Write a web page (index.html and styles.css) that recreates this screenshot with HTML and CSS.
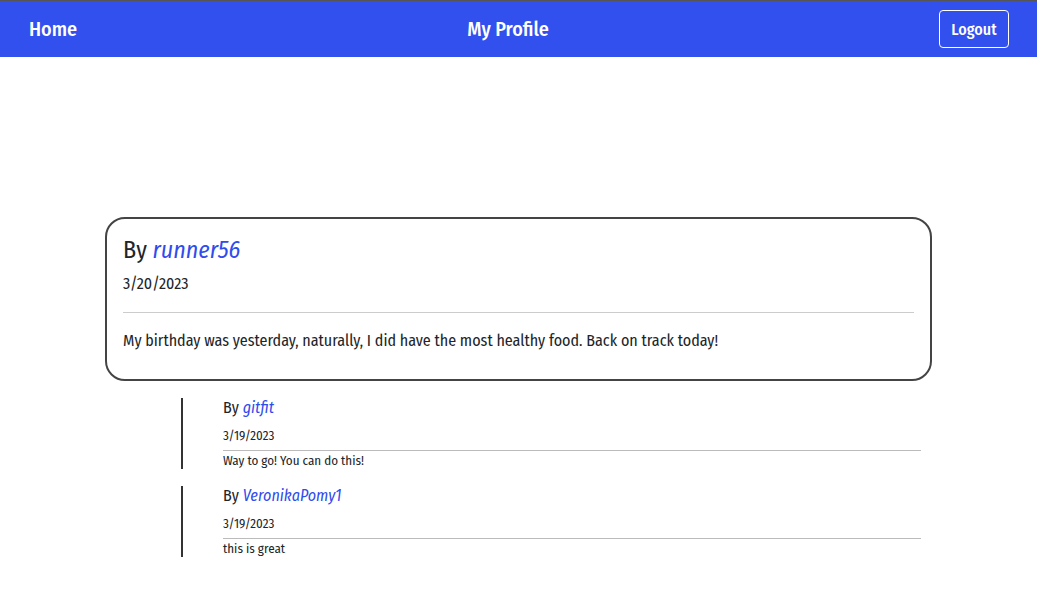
FILE: index.html
```html
<!DOCTYPE html>
<html>
<head>
<meta charset="utf-8">
<link rel="stylesheet" href="styles.css">
</head>
<body>
<nav class="nav">
  <a class="nav-link" href="#">Home</a>
  <span class="nav-title">My Profile</span>
  <button class="logout">Logout</button>
</nav>
<main class="main">
  <article class="post">
    <h2 class="post-author">By <a class="user" href="#">runner56</a></h2>
    <div class="post-date">3/20/2023</div>
    <hr class="post-rule">
    <p class="post-body">My birthday was yesterday, naturally, I did have the most healthy food. Back on track today!</p>
  </article>
  <section class="comments">
    <div class="comment">
      <div class="comment-author">By <a class="user" href="#">gitfit</a></div>
      <div class="comment-date">3/19/2023</div>
      <div class="comment-body">Way to go! You can do this!</div>
    </div>
    <div class="comment">
      <div class="comment-author">By <a class="user" href="#">VeronikaPomy1</a></div>
      <div class="comment-date">3/19/2023</div>
      <div class="comment-body">this is great</div>
    </div>
  </section>
</main>
</body>
</html>
```
FILE: styles.css
```css
* { box-sizing: border-box; }
body {
  margin: 0;
  font-family: "Fira Sans Condensed", "Fira Sans", sans-serif;
  color: #212529;
  background: #fff;
}
.nav {
  border-top: 1px solid #555;
  background: #3150ed;
  height: 57px;
  display: flex;
  align-items: center;
  justify-content: space-between;
  padding: 0 28px 0 29px;
  color: #fff;
}
.nav-link {
  color: #fff;
  text-decoration: none;
  font-size: 20px;
  font-weight: 500;
}
.nav-title {
  font-size: 20px;
  font-weight: 500;
}
.logout {
  width: 70px;
  height: 38px;
  background: transparent;
  color: #fff;
  border: 1px solid #fff;
  border-radius: 4px;
  font-family: inherit;
  font-size: 16px;
  font-weight: 500;
  padding: 0;
}
.main {
  padding-top: 160px;
}
.post {
  width: 827px;
  margin: 0 auto;
  border: 2px solid #444;
  border-radius: 20px;
  padding: 17px 16px 29px 16px;
}
.post-author {
  margin: 0;
  font-size: 24px;
  font-weight: 400;
  line-height: 29px;
}
.user {
  color: #2f4ced;
  font-style: italic;
  text-decoration: none;
}
.post-date {
  font-size: 16px;
  line-height: 19px;
  margin-top: 9px;
}
.post-rule {
  border: 0;
  border-top: 1px solid #ccc;
  margin: 19px 0 0;
}
.post-body {
  margin: 18px 0 0;
  font-size: 16px;
  line-height: 19px;
}
.comments {
  width: 740px;
  margin: 17px 0 0 181px;
  display: flex;
  flex-direction: column;
  gap: 17px;
}
.comment {
  border-left: 2px solid #333;
  padding-left: 40px;
}
.comment-author {
  font-size: 16px;
  line-height: 19px;
}
.comment-date {
  font-size: 13px;
  line-height: 16px;
  margin-top: 11px;
  padding-bottom: 6px;
  border-bottom: 1px solid #bbb;
}
.comment-body {
  font-size: 13px;
  line-height: 16px;
  margin-top: 2px;
}
```
